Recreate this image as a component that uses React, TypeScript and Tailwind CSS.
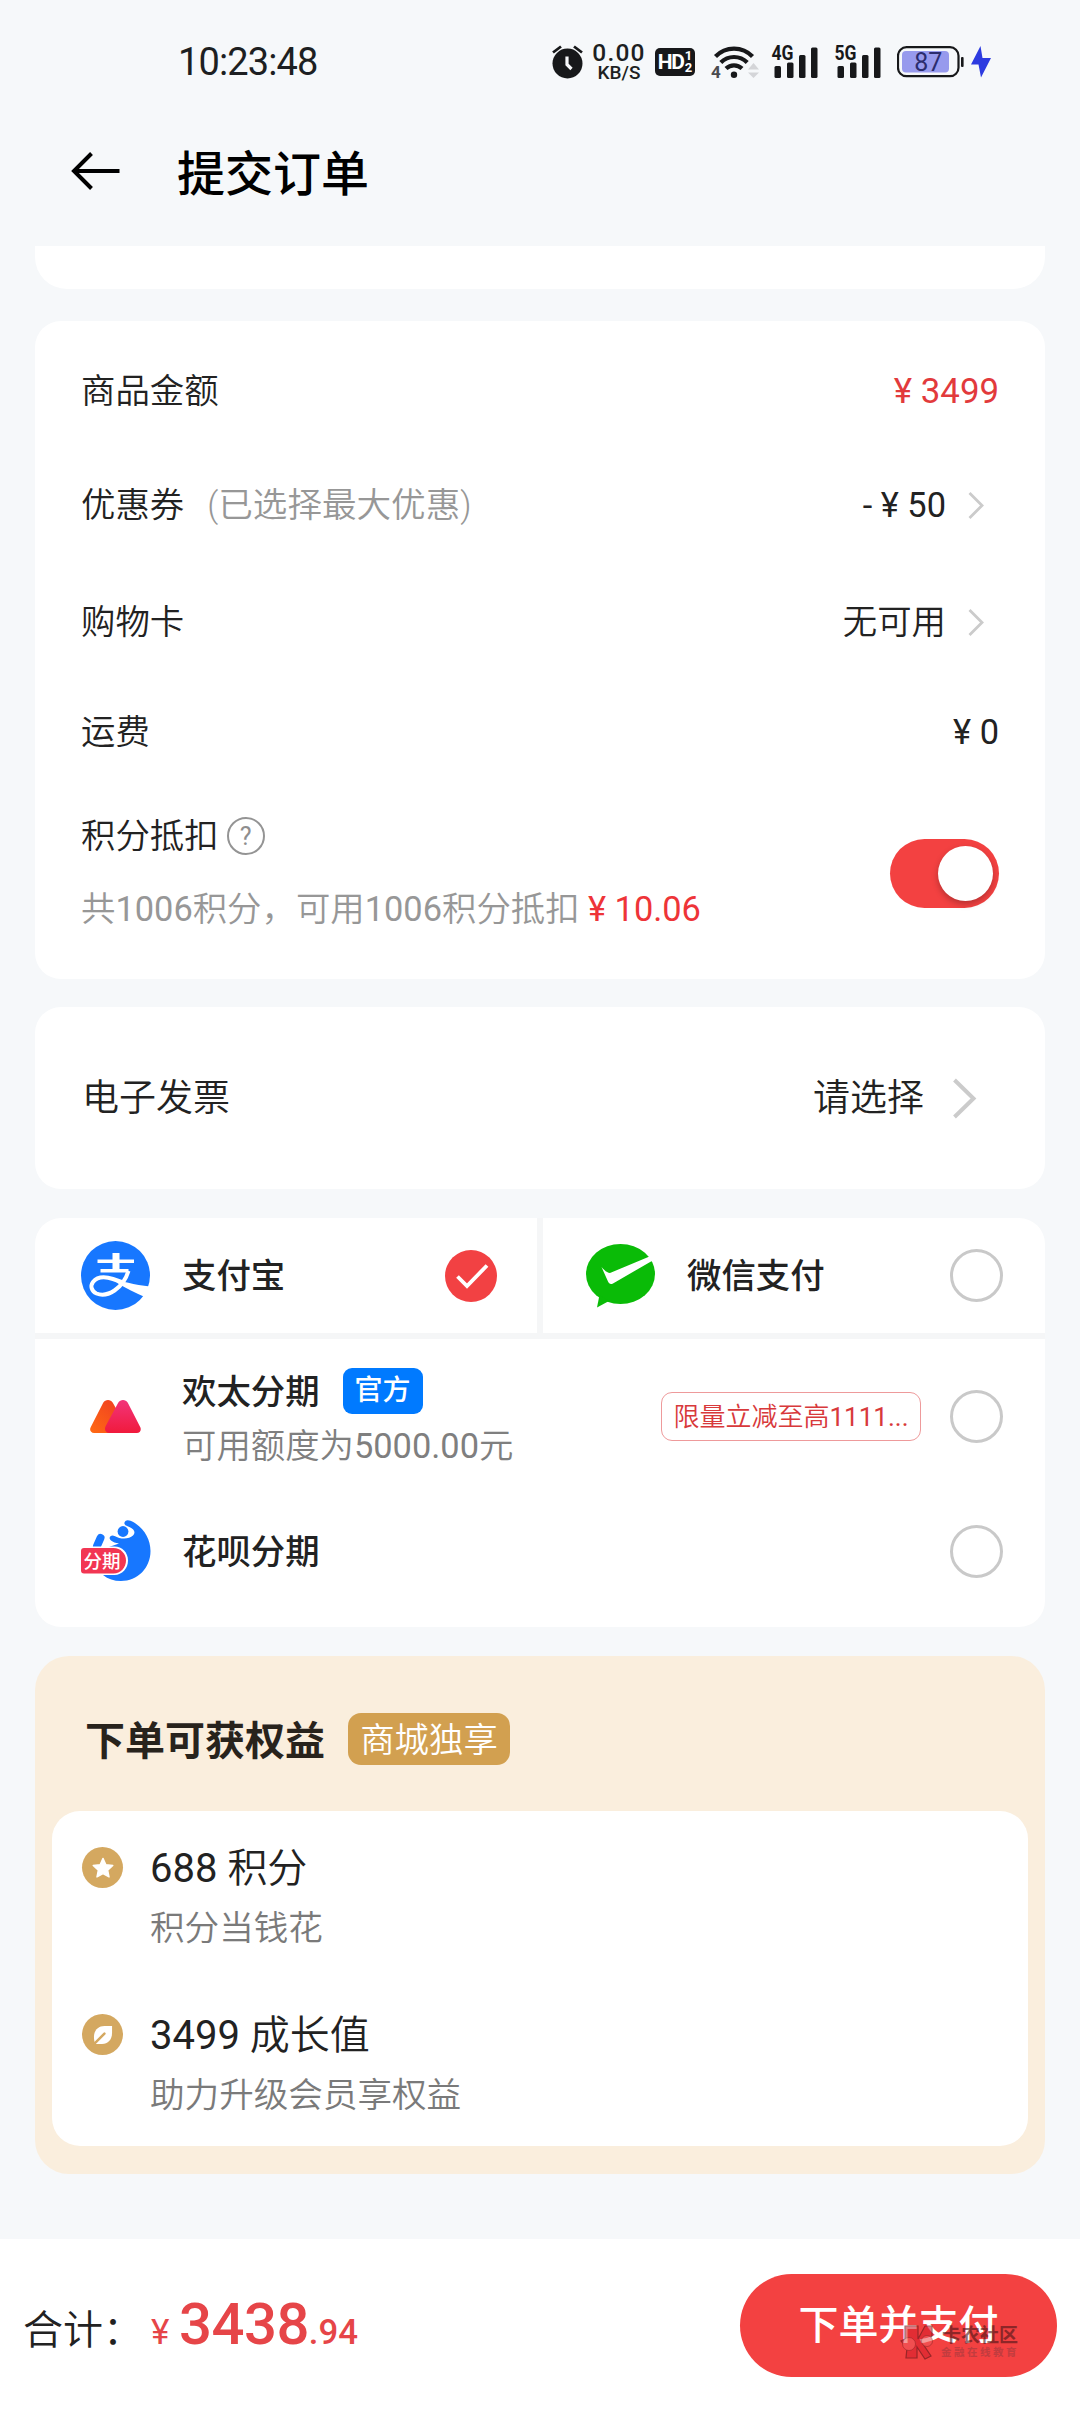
import type { ReactNode } from 'react'
import { clsx } from 'clsx'

function AlarmIcon() {
  return (
    <svg width="31" height="34" viewBox="0 0 31 34" fill="none">
      <circle cx="15.5" cy="18.5" r="15" fill="#17181a" />
      <path d="M1 7.5 9 1.5M30 7.5 22 1.5" stroke="#17181a" strokeWidth="2.8" />
      <path d="M15 11.5v8l4.5 4.5" stroke="#f7f8fa" strokeWidth="3.2" />
    </svg>
  )
}

function WifiIcon() {
  return (
    <svg width="48" height="36" viewBox="0 0 48 36" fill="none">
      <g stroke="#17181a" strokeWidth="4.2">
        <path d="M4.5 12.5a25.5 25.5 0 0 1 37 0" />
        <path d="M9.8 18.5a18.6 18.6 0 0 1 26.4 0" />
        <path d="M15 24.6a11.5 11.5 0 0 1 16 0" />
      </g>
      <circle cx="23" cy="30.8" r="3.2" fill="#17181a" />
      <path d="m37 25.5 5.5-6.5 5.5 6.5zM37 28.5h11L42.5 34z" fill="#d4d5d8" />
      <text x="0" y="33.5" fontSize="17" fontWeight="700" fill="#4a4b4f" fontFamily="Roboto">
        4
      </text>
    </svg>
  )
}

function SignalIcon({ label }: { label: string }) {
  return (
    <svg width="47" height="40" viewBox="0 -6 47 40">
      <g fill="#17181a">
        <rect x="3.5" y="21" width="6.5" height="12" rx="1.5" />
        <rect x="16" y="17.5" width="6.5" height="15.5" rx="1.5" />
        <rect x="28" y="10" width="6.5" height="23" rx="1.5" />
        <rect x="40" y="2.5" width="6.5" height="30.5" rx="1.5" />
      </g>
      <text x="0.5" y="14.5" fontSize="20.5" fontWeight="700" fill="#17181a" fontFamily="Roboto" textLength="22" lengthAdjust="spacingAndGlyphs">
        {label}
      </text>
    </svg>
  )
}

function BatteryIcon() {
  return (
    <svg width="67" height="32" viewBox="0 0 67 32">
      <rect x="1" y="1.2" width="60.5" height="29" rx="8.5" fill="none" stroke="#17181a" strokeWidth="2.2" />
      <rect x="5" y="5" width="47" height="21.5" rx="4" fill="#979aed" />
      <rect x="64" y="11" width="2.6" height="10" rx="1" fill="#17181a" />
      <text x="31.3" y="25" fontSize="25" fontWeight="400" textAnchor="middle" fill="#2b2c6e" fontFamily="Roboto">
        87
      </text>
    </svg>
  )
}

function StatusBar() {
  return (
    <div className="flex h-[124px] items-center pl-[178px]">
      <span className="w-[374px] text-[38px] leading-none font-normal tracking-[-0.9px] text-[#1d1f22]">10:23:48</span>
      <AlarmIcon />
      <div className="ml-[9px] flex w-[54px] flex-col items-center leading-none font-medium text-[#1d1f22]">
        <span className="text-[24.500px] leading-[20px] tracking-[1.2px]">0.00</span>
        <span className="text-[19px] leading-[19px]">KB/S</span>
      </div>
      <div className="ml-[9px] flex h-7 w-10 items-center justify-center gap-px rounded-[5px] bg-[#17181a] font-bold text-white">
        <span className="text-[21px] leading-none tracking-[-1.2px]">HD</span>
        <span className="flex flex-col text-[13px] leading-[12px]">
          <span>1</span>
          <span>2</span>
        </span>
      </div>
      <span className="ml-[16px]"><WifiIcon /></span>
      <span className="-mt-1.5 ml-[12px]"><SignalIcon label="4G" /></span>
      <span className="-mt-1.5 ml-4"><SignalIcon label="5G" /></span>
      <span className="ml-4"><BatteryIcon /></span>
      <svg className="ml-[7px]" width="20" height="32" viewBox="0 0 20 32">
        <path d="M9.5 0 0 18.500h7.500L10 31.500 20 12h-8.500z" fill="#2d3be0" />
      </svg>
    </div>
  )
}

function Chevron({ large }: { large?: boolean }) {
  return large ? (
    <svg width="25" height="41" viewBox="0 0 25 41" fill="none" stroke="#cbcbcb" strokeWidth="4">
      <path d="m2.500 2 19 18.500-19 18.500" />
    </svg>
  ) : (
    <svg width="16" height="27" viewBox="0 0 16 27" fill="none" stroke="#cbcbcb" strokeWidth="2.8">
      <path d="m1.500 1 12.500 12.500L1.500 26" />
    </svg>
  )
}

// Latin digits sit one step heavier than the Chinese text around them
function Num({ children }: { children: ReactNode }) {
  return <span className="font-normal">{children}</span>
}

function Row({ label, note, className, children }: { label: string; note?: string; className?: string; children: ReactNode }) {
  return (
    <div className={clsx('flex items-center justify-between pt-px pr-[46px] pl-[46px]', className)}>
      <div className="flex items-center">
        <span>{label}</span>
        {note ? <span className="ml-[23px] text-[34.600px] text-[#979797]">{note}</span> : null}
      </div>
      <div className="flex items-center">{children}</div>
    </div>
  )
}

function Radio({ checked }: { checked?: boolean }) {
  if (!checked) return <span className="h-[53px] w-[53px] rounded-full border-[3.5px] border-[#c9c9c9]" />
  return (
    <svg width="52" height="52" viewBox="0 0 52 52" fill="none">
      <circle cx="26" cy="26" r="26" fill="#f24143" />
      <path d="m12.500 26.500 9.500 9.500L42 15.500" stroke="#fff" strokeWidth="3.8" />
    </svg>
  )
}

function AlipayIcon() {
  return (
    <svg width="69" height="69" viewBox="0 0 69 69" fill="none">
      <circle cx="34.500" cy="34.500" r="34.500" fill="#1777ff" />
      <g stroke="#fff">
        <path d="M35 12v18" strokeWidth="7" />
        <path d="M16.500 20.300h36.500M19.500 29.800h28" strokeWidth="3.600" />
        <path d="M47.500 29.800C45 38 40 45 33.500 49.500c-6 4-13 5-18 3-5-2.200-6.500-7.500-3.500-11.500 4-5 12-5.500 20-3L42 41.500" strokeWidth="4" />
      </g>
      <path d="M30 36.500c10 4 24 7.500 40 9l-5 11C54 52 45 47 37 42.500z" fill="#fff" />
    </svg>
  )
}

function WechatPayIcon() {
  return (
    <svg width="69" height="64" viewBox="0 0 69 64">
      <ellipse cx="34.500" cy="30" rx="34.500" ry="30" fill="#0abb07" />
      <path d="M13.500 51 11 63.500 23 57z" fill="#0abb07" />
      <path d="M15.500 23c2.500 3 5.500 5.800 8.500 6L63.500 12.500l2.800 4.200L27 39.500c-2.500 1.200-4 .3-5-2z" fill="#fff" />
    </svg>
  )
}

function InstallmentIcon() {
  return (
    <svg width="51" height="33" viewBox="0 0 51 33">
      <defs>
        <linearGradient id="orange" x1="0" y1="1" x2="1" y2="0">
          <stop offset="0" stopColor="#ff6a13" />
          <stop offset="1" stopColor="#ee3a24" />
        </linearGradient>
        <linearGradient id="pink" x1="0" y1="0" x2="0" y2="1">
          <stop offset="0" stopColor="#f2347a" />
          <stop offset="1" stopColor="#f01a3c" />
        </linearGradient>
      </defs>
      <path d="M13.200 2.800c2.200-3.700 7.400-3.700 9.600 0L36 26c2 3.500 0 7-4 7H4C.8 33-.9 29.800.8 27z" fill="url(#orange)" />
      <path d="M28.200 2.800c2.200-3.700 7.400-3.700 9.600 0L50.200 27c1.500 3-.2 6-3.400 6H19.500c-3.800 0-5.700-3.500-3.800-7z" fill="url(#pink)" />
    </svg>
  )
}

function HuabeiIcon() {
  return (
    <svg width="70" height="62" viewBox="0 0 70 62">
      <path
        d="M43.500 2.500C44.500-.2 47-.3 49.500.8 61.500 6 69.500 18 69.500 31c0 17-13 30-29.500 30-7 0-13-2-18-6l6-28 10-3.500c-3.500-.5-6-1.500-8-3-3.500-3 .5-6.500 3.500-4.500 6 3.500 14.500 3.500 18.500-.500 3-3 1.500-7-6-9.500-2-.7-3-2-2.500-3.500z"
        fill="#1777ff"
      />
      <circle cx="42" cy="11.500" r="5.400" fill="#1777ff" />
      <path d="m19.500 18-3.500 8" stroke="#1777ff" strokeWidth="8" strokeLinecap="round" />
      <path d="M-2 26.500h35.500C41 26.500 47 32.500 47 40.500S41 55 33.500 55H-2z" fill="#fff" />
      <path d="M3 28h29.500C39.500 28 45 33.500 45 40.500S39.500 53.500 32.500 53.500H3c-2 0-3-1-3-3V31c0-2 1-3 3-3z" fill="#f23653" />
      <text x="2.500" y="47.800" fontSize="18.500" fontWeight="500" fill="#fff" fontFamily="Noto Sans CJK SC">
        分期
      </text>
    </svg>
  )
}

function PayTile({ icon, name, checked }: { icon: ReactNode; name: string; checked?: boolean }) {
  return (
    <div className={clsx('flex h-[115px] items-center bg-white font-medium', checked ? 'w-[502px] pr-10 pl-[46px]' : 'flex-1 pr-[42px] pl-[43px]')}>
      <span className="flex w-[69px] justify-center">{icon}</span>
      <span className="ml-8 flex-1 pt-0.5">{name}</span>
      <Radio checked={checked} />
    </div>
  )
}

function Benefit({ icon, amount, unit, text }: { icon: ReactNode; amount: number; unit: string; text: string }) {
  return (
    <div className="flex gap-[27px]">
      <span className="mt-0.5 flex h-[41px] w-[41px] items-center justify-center rounded-full bg-[#d4a860]">{icon}</span>
      <div className="flex flex-col pt-px">
        <span className="text-[40px] leading-[46px] text-[#222]">
          <Num>{amount} </Num>
          {unit}
        </span>
        <span className="mt-[17px] text-[34.600px] leading-[38px] text-[#7a7a7a]">{text}</span>
      </div>
    </div>
  )
}

function Watermark() {
  return (
    <div className="absolute top-[50px] left-[160px] flex items-center gap-[7px] opacity-60">
      <svg width="34" height="36" viewBox="0 0 34 36" fill="#d8202c" stroke="#5c1418" strokeWidth="1.200">
        <path d="M5 2h13v13l7-13h7v10L23 20l8 12-6 3-8-12v11H6l1-10-6-7 4-2z" />
        <circle cx="9" cy="20" r="6.500" fill="#f0585a" strokeWidth="0.600" />
        <circle cx="27" cy="17" r="5.500" fill="#f0585a" strokeWidth="0.600" />
      </svg>
      <div className="flex flex-col">
        <span className="text-[19px] leading-[21px] font-bold whitespace-nowrap text-[#4a1518]">卡农社区</span>
        <span className="text-[10.500px] leading-[14px] font-bold tracking-[2.500px] whitespace-nowrap text-[#a03a3e]">金融在线教育</span>
      </div>
    </div>
  )
}

export default function App() {
  return (
    <div className="flex h-[2412px] w-[1080px] flex-col overflow-hidden bg-[#f6f8fa] font-['Roboto','Noto_Sans_CJK_SC',sans-serif] text-[34.400px] leading-none font-[350] text-[#222]">
      <header className="h-[246px]">
        <StatusBar />
        <div className="flex h-[98px] items-center pl-[71px] text-black">
          <svg className="mb-[5px]" width="49" height="38" viewBox="0 0 49 38" fill="none" stroke="currentColor" strokeWidth="4">
            <path d="M48.500 19H3M20.500 1.500 3 19l17.500 17.500" />
          </svg>
          <h1 className="ml-[57px] pt-1 text-[48px] font-medium">提交订单</h1>
        </div>
      </header>

      <main className="flex flex-col px-[35px]">
        <div className="h-[43px] rounded-b-[32px] bg-white" />

        <section className="mt-8 h-[658px] rounded-[26px] bg-white pt-[13px]">
          <Row label="商品金额" className="h-[114px]">
            <span className="text-[34.800px] font-normal text-[#e23a3c]">¥ 3499</span>
          </Row>
          <Row label="优惠券" note="(已选择最大优惠)" className="h-[114px]">
            <span className="mr-[22px] font-normal">- ¥ 50</span>
            <span className="pr-[15px]"><Chevron /></span>
          </Row>
          <Row label="购物卡" className="h-[120px]">
            <span className="mr-[22px]">无可用</span>
            <span className="pr-[15px]"><Chevron /></span>
          </Row>
          <Row label="运费" className="h-[100px]">
            <Num>¥ 0</Num>
          </Row>
          <div className="flex h-[183px] items-center justify-between px-[46px]">
            <div className="flex flex-col gap-[35px]">
              <div className="flex h-[38px] items-center gap-2">
                <span className="pb-px">积分抵扣</span>
                <span className="-mt-0.5 flex h-[38px] w-[38px] items-center justify-center rounded-full border-[2.500px] border-[#949494] text-[25px] font-normal text-[#8e8e8e]">?</span>
              </div>
              <p className="h-[38px] leading-[36px] text-[#979797]">
                共<Num>1006</Num>积分，可用<Num>1006</Num>积分抵扣 <span className="font-normal text-[#ee3438]">¥ 10.06</span>
              </p>
            </div>
            <div className="flex h-[69px] w-[109px] items-center justify-end rounded-full bg-[#f34141] pr-1.5">
              <span className="h-[55px] w-[55px] rounded-full bg-white shadow-[0_3px_6px_rgba(0,0,0,0.25)]" />
            </div>
          </div>
        </section>

        <section className="mt-7 flex h-[182px] items-center justify-between rounded-[26px] bg-white pr-[68px] pl-[47px] text-[37px]">
          <span>电子发票</span>
          <span className="flex items-center gap-[28px]">
            请选择
            <Chevron large />
          </span>
        </section>

        <section className="mt-[29px] h-[409px] overflow-hidden rounded-[26px] bg-[#f5f6f7]">
          <div className="flex gap-1.5">
            <PayTile icon={<AlipayIcon />} name="支付宝" checked />
            <PayTile icon={<WechatPayIcon />} name="微信支付" />
          </div>
          <div className="mt-1.5 h-[288px] bg-white pr-[42px] pl-[46px]">
            <div className="flex h-[154px] items-center">
              <span className="flex w-[69px] justify-center"><InstallmentIcon /></span>
              <div className="ml-8 flex-1">
                <div className="flex h-[46px] items-center">
                  <span className="pt-[3px] font-medium">欢太分期</span>
                  <span className="ml-[23px] flex h-[46px] w-20 items-center justify-center rounded-[9px] bg-[#007aff] text-[28px] font-medium text-white">官方</span>
                </div>
                <p className="mt-[13px] h-[38px] leading-[38px] text-[#7f7f7f]">
                  可用额度为<Num>5000.00</Num>元
                </p>
              </div>
              <span className="mr-[29px] flex h-[49px] w-[260px] items-center justify-center rounded-[11px] border border-[#ee9a9b] pt-0.5 text-[26px] whitespace-nowrap text-[#d8393b]">
                限量立减至高<Num>1111...</Num>
              </span>
              <Radio />
            </div>
            <div className="flex h-[116px] items-center">
              <HuabeiIcon />
              <span className="ml-[31px] flex-1 pt-0.5 font-medium">花呗分期</span>
              <Radio />
            </div>
          </div>
        </section>

        <section className="mt-[29px] h-[518px] rounded-[34px] bg-[#faeedd] px-[17px]">
          <div className="flex h-[155px] items-center pt-[11px] pl-[33px]">
            <h2 className="pt-[5px] text-[40px] font-bold text-[#28231c]">下单可获权益</h2>
            <span className="ml-[23px] flex h-[52px] w-[162px] items-center justify-center rounded-[13px] bg-[#d2a050] pt-0.5 text-white">商城独享</span>
          </div>
          <div className="flex h-[335px] flex-col gap-[65px] rounded-[28px] bg-white pt-[34px] pl-[30px]">
            <Benefit
              amount={688}
              unit="积分"
              text="积分当钱花"
              icon={
                <svg width="22" height="22" viewBox="0 0 24 24" fill="#fff" stroke="#fff" strokeWidth="1.500" strokeLinejoin="round">
                  <path d="m12 1.500 3.200 6.900 7.500.9-5.600 5.100 1.500 7.400L12 18.100l-6.600 3.700 1.500-7.400L1.300 9.300l7.500-.9z" />
                </svg>
              }
            />
            <Benefit
              amount={3499}
              unit="成长值"
              text="助力升级会员享权益"
              icon={
                <svg width="20" height="20" viewBox="0 0 21 21" fill="none">
                  <path d="M20 1v7.500C20 15.500 15.500 20 9.500 20H2.500C1.500 18 1 15 1 12.500 1 5.500 5.500 1 12 1z" fill="#fff" />
                  <path d="M1 20 12 9" stroke="#d4a860" strokeWidth="2.600" strokeLinecap="round" />
                </svg>
              }
            />
          </div>
        </section>
      </main>

      <footer className="mt-auto flex h-[173px] items-center justify-between bg-white pr-[23px] pl-[23px]">
        <div className="flex items-baseline pb-[3px]">
          <span className="w-[128px] text-[40px] whitespace-nowrap">合计：</span>
          <span className="w-[28px] text-[35px] font-normal text-[#e64548]">¥</span>
          <span className="text-[58px] font-medium tracking-[-0.5px] text-[#e64548]">3438</span>
          <span className="text-[34.800px] font-medium text-[#e64548]">.94</span>
        </div>
        <button className="relative flex h-[103px] w-[317px] items-center justify-center rounded-full bg-[#f34141] text-[40px] font-medium text-white">
          下单并支付
          <Watermark />
        </button>
      </footer>
    </div>
  )
}
